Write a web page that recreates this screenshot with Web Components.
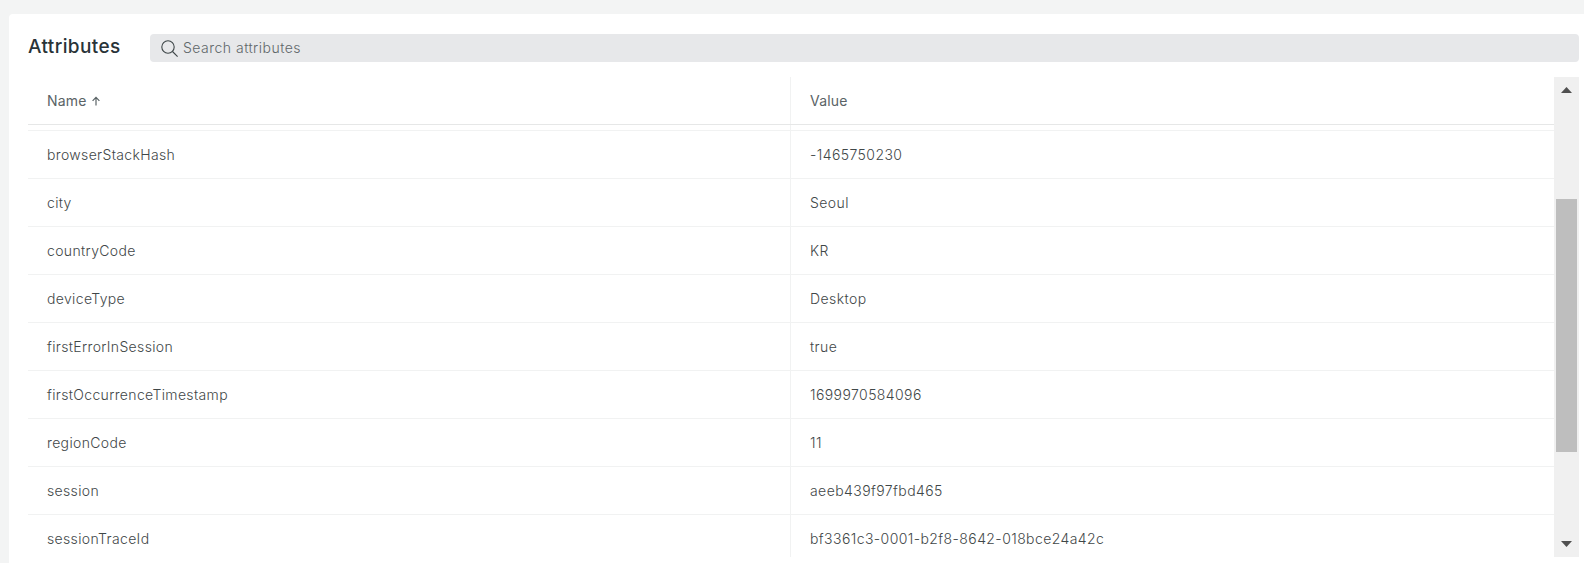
<!DOCTYPE html>
<html>
<head>
<meta charset="utf-8">
<title>Attributes</title>
<style>
  html, body { margin: 0; height: 100%; overflow: hidden; background: #f3f4f4; }
  body { font-family: Inter, "Liberation Sans", sans-serif; }
</style>
</head>
<body>
<attr-panel heading="Attributes" placeholder="Search attributes">
  <attr-row name="browserStackHash" value="-1465750230"></attr-row>
  <attr-row name="city" value="Seoul"></attr-row>
  <attr-row name="countryCode" value="KR"></attr-row>
  <attr-row name="deviceType" value="Desktop"></attr-row>
  <attr-row name="firstErrorInSession" value="true"></attr-row>
  <attr-row name="firstOccurrenceTimestamp" value="1699970584096"></attr-row>
  <attr-row name="regionCode" value="11"></attr-row>
  <attr-row name="session" value="aeeb439f97fbd465"></attr-row>
  <attr-row name="sessionTraceId" value="bf3361c3-0001-b2f8-8642-018bce24a42c"></attr-row>
</attr-panel>

<script>
class AttrRow extends HTMLElement {
  constructor() {
    super();
    const shadow = this.attachShadow({ mode: 'open' });
    shadow.innerHTML = `
      <style>
        :host {
          display: grid;
          grid-template-columns: 762px 1fr;
          height: 47px;
          border-bottom: 1px solid #f1f2f2;
          font-size: 14px;
          font-weight: 300;
          letter-spacing: 0.35px;
          color: #3f4748;
        }
        .cell { display: flex; align-items: center; padding-left: 19px; }
        .cell + .cell { border-left: 1px solid #f1f2f2; letter-spacing: 0.42px; }
      </style>
      <div class="cell">${this.getAttribute('name')}</div>
      <div class="cell">${this.getAttribute('value')}</div>
    `;
  }
}

class AttrScrollbar extends HTMLElement {
  constructor() {
    super();
    const shadow = this.attachShadow({ mode: 'open' });
    shadow.innerHTML = `
      <style>
        :host {
          display: flex;
          flex-direction: column;
          align-items: center;
          justify-content: space-between;
          flex: 0 0 25px;
          background: #f0f0f0;
          padding: 10px 0;
          box-sizing: border-box;
          position: relative;
        }
        svg { display: block; }
        .thumb {
          position: absolute;
          left: 2px;
          right: 2px;
          top: 122px;
          height: 253px;
          background: #bebebe;
        }
      </style>
      <svg width="11" height="6" viewBox="0 0 11 6"><path d="M5.5 0L11 6H0z" fill="#505050"/></svg>
      <div class="thumb"></div>
      <svg width="11" height="6" viewBox="0 0 11 6"><path d="M0 0h11L5.5 6z" fill="#505050"/></svg>
    `;
  }
}

class AttrPanel extends HTMLElement {
  constructor() {
    super();
    const shadow = this.attachShadow({ mode: 'open' });
    shadow.innerHTML = `
      <style>
        :host {
          display: block;
          margin: 14px 0 0 9px;
          height: 549px;
          padding: 20px 5px 6px 19px;
          box-sizing: border-box;
          background: #fff;
          border-radius: 4px 0 0 0;
          overflow: hidden;
        }
        .top { display: flex; align-items: center; gap: 30px; height: 28px; }
        h2 {
          margin: 0;
          width: 92px;
          font-size: 19px;
          font-weight: 500;
          letter-spacing: 0.4px;
          color: #293338;
          white-space: nowrap;
          position: relative;
          top: -2px;
        }
        .search {
          flex: 1;
          height: 28px;
          display: flex;
          align-items: center;
          gap: 5px;
          padding-left: 11px;
          background: #e7e8ea;
          border-radius: 4px;
          font-size: 14px;
          font-weight: 300;
          letter-spacing: 0.48px;
          color: #5f6769;
        }
        .search svg { display: block; flex: none; }
        .search span { position: relative; top: -1px; }
        .body { display: flex; height: 480px; margin-top: 15px; }
        .table { flex: 1; min-width: 0; overflow: hidden; }
        .head {
          display: grid;
          grid-template-columns: 762px 1fr;
          height: 47px;
          border-bottom: 1px solid #e6e7e7;
          font-size: 14px;
          font-weight: 400;
          letter-spacing: 0.2px;
          color: #5a6366;
        }
        .head div { display: flex; align-items: center; gap: 4px; padding-left: 19px; }
        .head div + div { border-left: 1px solid #f1f2f2; }
        .head svg { display: block; }
        .gap {
          height: 5px;
          border-bottom: 1px solid #f1f2f2;
          display: grid;
          grid-template-columns: 762px 1fr;
        }
        .gap i { grid-column: 2; border-left: 1px solid #f1f2f2; }
      </style>
      <div class="top">
        <h2>${this.getAttribute('heading')}</h2>
        <div class="search">
          <svg width="17" height="17" viewBox="0 0 17 17" fill="none" stroke="#3d4547" stroke-width="1.1">
            <circle cx="7" cy="7" r="6.2"/><path d="M11.5 11.5L16.6 16.6"/>
          </svg>
          <span>${this.getAttribute('placeholder')}</span>
        </div>
      </div>
      <div class="body">
        <div class="table">
          <div class="head">
            <div>Name
              <svg width="10" height="10" viewBox="0 0 10 10" fill="none" stroke="#5a6366" stroke-width="1.2"><path d="M5 9.5V1.5M1.6 4.8L5 1.4l3.4 3.4"/></svg>
            </div>
            <div>Value</div>
          </div>
          <div class="gap"><i></i></div>
          <slot></slot>
        </div>
        <attr-scrollbar></attr-scrollbar>
      </div>
    `;
  }
}

customElements.define('attr-row', AttrRow);
customElements.define('attr-scrollbar', AttrScrollbar);
customElements.define('attr-panel', AttrPanel);
</script>
</body>
</html>
